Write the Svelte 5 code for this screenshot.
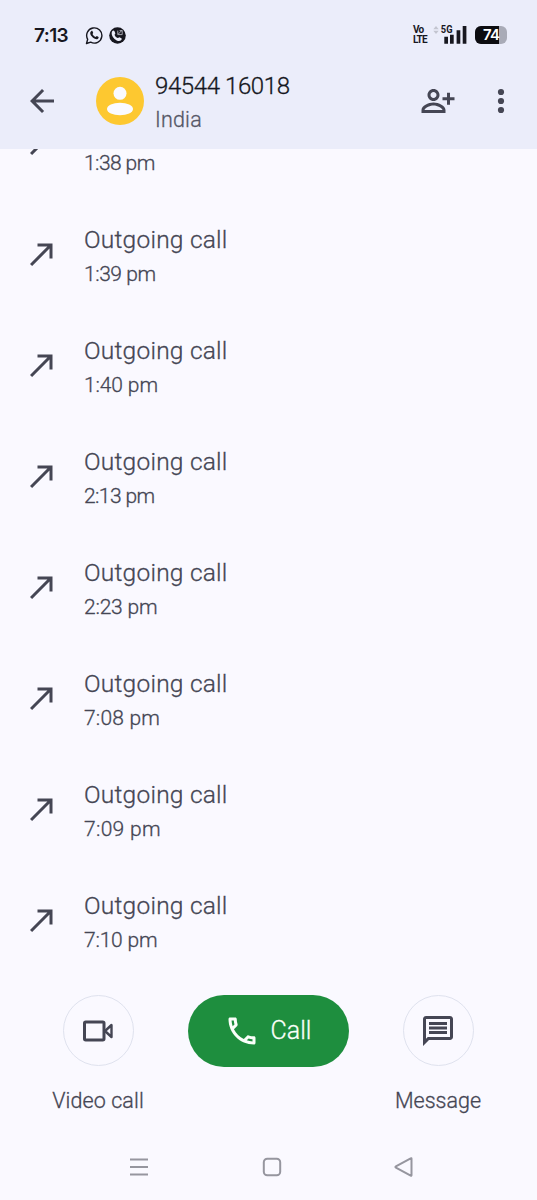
<script>
  const calls = [
    { time: '1:38 pm', tracking: -0.57 },
    { time: '1:39 pm', tracking: -0.45 },
    { time: '1:40 pm', tracking: -0.12 },
    { time: '2:13 pm', tracking: -0.6 },
    { time: '2:23 pm', tracking: -0.2 },
    { time: '7:08 pm', tracking: 0.2 },
    { time: '7:09 pm', tracking: 0.3 },
    { time: '7:10 pm', tracking: -0.2 }
  ];
</script>

<div class="screen">
  <header>
    <div class="status">
      <span class="clock">7:13</span>
      <svg class="wa" width="19" height="19" viewBox="0 0 19 19">
        <path d="M1.500 17.500l1.200-4.200a7.600 7.600 0 1 1 3 2.900z" fill="none" stroke="#17171f" stroke-width="1.400" stroke-linejoin="round" />
        <path d="M6.200 5.200c.5-.5 1.100-.4 1.300.1l.7 1.500c.1.4-.6 1-.7 1.300.6 1.300 1.700 2.300 3.100 2.900.4 0 .9-1 1.300-.9l1.600.8c.4.3 0 1.600-.8 2-1.200.7-3.100 0-4.700-1.200-1.500-1.200-2.900-3.100-2.800-4.600 0-.8.4-1.400 1-1.900z" fill="#17171f" />
      </svg>
      <svg class="wb" width="17" height="17" viewBox="0 0 17 17">
        <circle cx="8.500" cy="8.500" r="8.300" fill="#17171f" />
        <path d="M3.200 4.300c.7-1.100 1.900-1.100 2.300 0l.8 2c.1.600-.9 1.200-.7 1.600.7 1.500 1.600 2.500 3.100 3.200.6.100 1-1.100 1.600-.9l2.100 1c.7.500.2 1.800-.7 2.400-1.900 1-4.200 0-6.200-1.700-2.100-1.800-3.700-5.400-2.300-7.600z" fill="#eceefa" />
        <path d="M8.800 3.600v4h4.400V3.600h-2.600M9.200 7.200l3.800-3.900" fill="none" stroke="#b4b6c0" stroke-width=".9" />
      </svg>
      <div class="volte"><span>Vo</span><span>LTE</span></div>
      <svg class="signal" width="36" height="22" viewBox="0 0 36 22">
        <path d="M.3 5.200L3 2l2.700 3.200zM.3 6.800L3 10l2.700-3.200z" fill="#c3c5d0" />
        <text x="7.800" y="9.300" textLength="11.700" lengthAdjust="spacingAndGlyphs">5G</text>
        <path d="M11.300 12.700H15v7h-3.700zM17 10.700h3.700v9H17zM23.600 6.300h3.700v13.400h-3.700zM29.700 2h3.700v17.700h-3.700z" fill="#17171f" />
      </svg>
      <div class="battery"><div class="level" style="width: 74%"></div><span>74</span></div>
    </div>
    <div class="bar">
      <svg class="back" width="36" height="36" viewBox="0 0 24 24"><path d="M20 11H7.830l5.590-5.590L12 4l-8 8 8 8 1.410-1.410L7.830 13H20z" /></svg>
      <svg class="avatar" width="48" height="48" viewBox="0 0 48 48">
        <circle cx="24" cy="24" r="24" fill="#fdc830" />
        <circle cx="24" cy="16.300" r="6.500" fill="#fafaff" />
        <ellipse cx="24" cy="32" rx="13" ry="6.200" fill="#fafaff" />
      </svg>
      <div class="who"><div class="number">94544 16018</div><div class="place">India</div></div>
      <svg class="add" width="36" height="36" viewBox="0 0 24 24"><path d="M13 8c0-2.210-1.790-4-4-4S5 5.790 5 8s1.790 4 4 4 4-1.790 4-4zm-2 0c0 1.100-.9 2-2 2s-2-.9-2-2 .9-2 2-2 2 .9 2 2zM1 18v2h16v-2c0-2.800-4.500-5-8-5s-8 2.200-8 5zm2 0c.3-1.300 3.300-3 6-3s5.700 1.700 6 3zM20 14.500v-3h3v-2h-3v-3h-2v3h-3v2h3v3z" /></svg>
      <svg class="more" width="8" height="26" viewBox="0 0 8 26"><circle cx="4" cy="4" r="3.100" /><circle cx="4" cy="13" r="3.100" /><circle cx="4" cy="22" r="3.100" /></svg>
    </div>
  </header>

  <main>
    {#each calls as call}
      <div class="row">
        <svg width="36" height="36" viewBox="0 0 24 24"><path d="M9 5v2h6.590L4 18.590 5.410 20 17 8.410V15h2V5z" /></svg>
        <div class="text">
          <div class="title">Outgoing call</div>
          <div class="time" style="letter-spacing: {call.tracking}px">{call.time}</div>
        </div>
      </div>
    {/each}
  </main>

  <section class="actions">
    <div class="action">
      <div class="round">
        <svg class="camera" width="32" height="24" viewBox="0 0 32 24">
          <rect x="2.500" y="3" width="19.500" height="18" rx="1.200" />
          <path d="M23 12l6.500-6v12z" stroke-width="2.400" />
        </svg>
      </div>
      <span class="video">Video call</span>
    </div>
    <div class="call">
      <svg width="36" height="36" viewBox="0 0 24 24"><path d="M6.540 5c.06.89.21 1.760.45 2.590l-1.200 1.200c-.41-1.200-.67-2.470-.76-3.790h1.510m9.860 12.020c.85.24 1.720.39 2.600.45v1.490c-1.320-.09-2.590-.35-3.800-.75l1.200-1.190M7.500 3H4c-.55 0-1 .45-1 1 0 9.390 7.610 17 17 17 .55 0 1-.45 1-1v-3.490c0-.55-.45-1-1-1-1.240 0-2.450-.2-3.570-.57-.1-.04-.21-.05-.31-.05-.26 0-.51.1-.71.29l-2.200 2.200c-2.830-1.450-5.150-3.760-6.590-6.590l2.200-2.200c.28-.28.36-.67.25-1.020C8.700 6.450 8.500 5.250 8.500 4c0-.55-.45-1-1-1z" /></svg>
      <span>Call</span>
    </div>
    <div class="action">
      <div class="round">
        <svg width="36" height="36" viewBox="0 0 24 24"><path d="M4 4h16v12H5.170L4 17.170V4m0-2c-1.100 0-1.990.9-1.990 2L2 22l4-4h14c1.100 0 2-.9 2-2V4c0-1.100-.9-2-2-2H4zM6 6h12v2H6zM6 9h12v2H6zM6 12h12v2H6z" /></svg>
      </div>
      <span class="message">Message</span>
    </div>
  </section>

  <nav>
    <svg width="20" height="20" viewBox="0 0 20 20"><path d="M1 2.500h18M1 10h18M1 17.500h18" /></svg>
    <svg width="20" height="20" viewBox="0 0 20 20"><rect x="1.800" y="1.800" width="16.400" height="16.400" rx="3.500" /></svg>
    <svg width="20" height="20" viewBox="0 0 20 20"><path d="M17.500 1.700v16.600q0 .8-.8.4L1.900 10.600q-1-.6 0-1.200L16.700 1.300q.8-.4.8.4z" /></svg>
  </nav>
</div>

<style>
  :global(body) { margin: 0; background: #faf9ff; }
  .screen { width: 537px; height: 1200px; display: flex; flex-direction: column; overflow: hidden; background: #faf9ff; color: #454654; font-family: Roboto, sans-serif; }
  svg { display: block; flex: none; fill: #454654; }
  header { height: 149px; flex: none; background: #ebedfa; }
  .status { height: 70px; display: flex; align-items: center; padding-left: 34px; color: #17171f; box-sizing: border-box; }
  .clock { width: 50px; font: 600 19px/24px Inter, sans-serif; letter-spacing: -0.6px; padding-top: 2px; }
  .wa { margin-left: 1px; }
  .wb { margin-left: 5px; }
  .volte { margin-left: 287px; width: 20px; display: flex; flex-direction: column; font: 700 10px/10px Roboto, sans-serif; letter-spacing: -0.800px; }
  .signal { fill: #17171f; }
  .signal text { font: 700 10.500px Roboto, sans-serif; }
  .battery { position: relative; margin-left: 6px; width: 32px; height: 18px; border-radius: 6px; overflow: hidden; background: #a9abb7; display: flex; align-items: center; justify-content: center; color: #fff; font: 600 15px/18px Inter, sans-serif; letter-spacing: -1px; }
  .level { position: absolute; left: 0; top: 0; height: 100%; background: #0c0c10; }
  .battery span { position: relative; }
  .bar { height: 62px; display: flex; align-items: center; padding-left: 24px; }
  .avatar { margin-left: 35.500px; }
  .who { margin: 3px 0 0 11.500px; width: 264.500px; color: #151721; font-weight: 300; -webkit-text-stroke: 0.3px currentColor; }
  .number { font-size: 24px; line-height: 34px; letter-spacing: -0.4px; }
  .place { font-size: 21.500px; line-height: 34px; color: #555766; letter-spacing: 0.2px; }
  .more { margin-left: 41.500px; }
  main { height: 828px; flex: none; overflow: hidden; display: flex; flex-direction: column; justify-content: flex-end; }
  .row { height: 111px; flex: none; display: flex; align-items: center; gap: 24px; padding-left: 24px; }
  .row svg { margin-bottom: 4px; }
  .text { padding-top: 3px; font-weight: 300; -webkit-text-stroke: 0.3px currentColor; }
  .title { font-size: 24.500px; line-height: 34px; letter-spacing: 0.23px; }
  .time { font-size: 21px; line-height: 34px; }
  .actions { height: 158px; flex: none; box-sizing: border-box; padding: 18px 49px 0 48px; display: flex; align-items: flex-start; justify-content: space-between; font-weight: 300; }
  .action { width: 100px; display: flex; flex-direction: column; align-items: center; font-size: 21.500px; line-height: 28px; gap: 21px; white-space: nowrap; }
  .action span, .call span { -webkit-text-stroke: 0.3px currentColor; }
  .video { letter-spacing: 0.1px; }
  .round { width: 71px; height: 71px; box-sizing: border-box; border: 1.500px solid #dfe2ee; border-radius: 50%; display: flex; align-items: center; justify-content: center; }
  .camera { fill: none; stroke: #454654; stroke-width: 3; stroke-linejoin: round; }
  .call { width: 161px; height: 71.500px; border-radius: 36px; background: #1e8e3e; color: #fafffa; display: flex; align-items: center; box-sizing: border-box; padding-left: 36px; gap: 11px; font-size: 25px; }
  .call svg { fill: #fafffa; }
  nav { height: 64px; flex: none; display: flex; justify-content: space-between; align-items: center; padding: 0 123px 0 129px; }
  nav svg { fill: none; stroke: #96969f; stroke-width: 2; }
</style>
